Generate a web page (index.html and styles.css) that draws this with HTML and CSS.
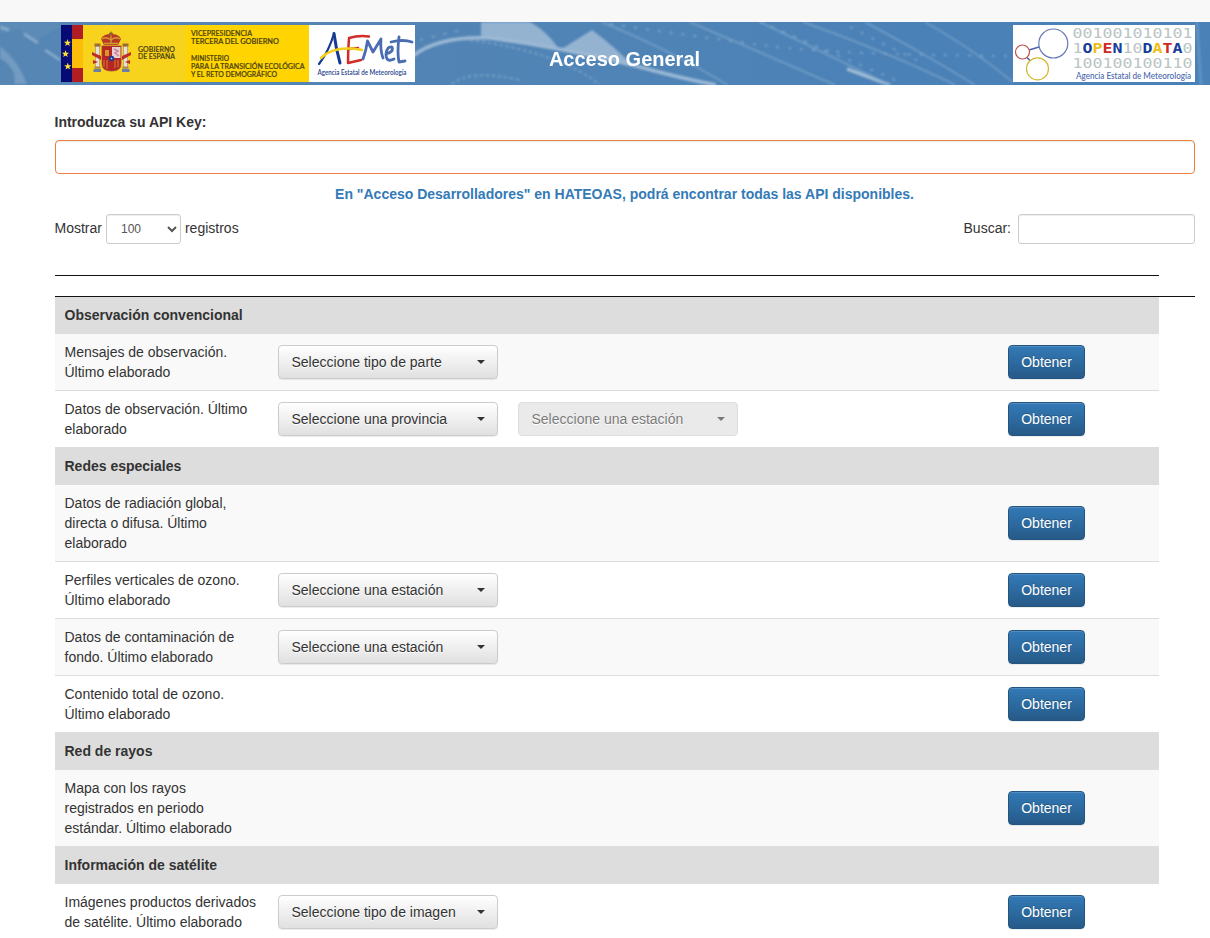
FILE: index.html
```html
<!DOCTYPE html>
<html lang="es">
<head>
<meta charset="utf-8">
<title>AEMET OpenData - Acceso General</title>
<link rel="stylesheet" href="styles.css">
</head>
<body>
<div class="topbar"></div>
<header class="banner">
  <svg class="banner-bg" viewBox="0 0 1210 63" preserveAspectRatio="none" aria-hidden="true">
    <defs><linearGradient id="sky" x2="1"><stop offset="0" stop-color="#5686b4"/><stop offset=".5" stop-color="#5084b6"/><stop offset=".75" stop-color="#4a81b7"/><stop offset="1" stop-color="#4a82b8"/></linearGradient>
    <filter id="soft"><feGaussianBlur stdDeviation=".8"/></filter></defs>
    <rect width="1210" height="63" fill="url(#sky)"/>
    <g filter="url(#soft)">
      <path d="M0 0H60V5L35 20L20 7L0 12Z" fill="#6895bd" opacity=".35"/>
      <path d="M0 24Q18 38 27 62H14Q18 48 0 36Z" fill="#8fb1cf" opacity=".5"/>
      <path d="M0 5L9 8M24 12L38 21M45 28L60 38" stroke="#a4c0d8" stroke-width="2.500" opacity=".7" fill="none"/>
      <path d="M481 0H530C543 7 552 17 560 28L592 8Q615 25 632 43Q580 31 548 26Q510 17 481 15Z" fill="#94b3d1"/>
      <path d="M413 34Q438 14 490 16Q560 25 636 44Q680 56 716 63" fill="none" stroke="#9dbad5" stroke-width="3.500"/>
      <path d="M847 47L890 63" stroke="#a6c1da" stroke-width="3"/>
      <path d="M602 0Q670 28 728 63M690 0L835 63M760 0L890 63M803 0Q900 35 955 63M865 0Q930 35 975 63M925 0Q970 25 1013 60M1197 0L1201 63" fill="none" stroke="#7ba4ca" stroke-width="2" opacity=".7"/>
      <path d="M470 18Q560 30 600 63M452 62Q470 47 520 58" fill="none" stroke="#9ab9d5" stroke-width="1.800" stroke-dasharray="3 3" opacity=".6"/>
      <path d="M610 2Q700 15 770 24T1013 34M760 0L900 60M420 18L460 8M850 5L920 40" fill="none" stroke="#94b7d7" stroke-width="1.800" stroke-dasharray="3 9" opacity=".65"/>
    </g>
  </svg>
  <svg class="logo-gob" width="354" height="57" viewBox="0 0 354 57" role="img" aria-label="Gobierno de España y AEMET">
    <rect width="354" height="57" fill="#fff"/>
    <rect width="11" height="57" fill="#050a75"/>
    <rect x="11" width="11" height="57" fill="#b01e24"/>
    <rect x="11" y="14" width="11" height="29" fill="#fcbd08"/>
    <rect x="22" width="103" height="57" fill="#f8d31d"/>
    <rect x="125" width="123" height="57" fill="#ffd400"/>
    <g fill="#ffe234">
      <path id="star" d="M6.500 14L7.400 16.700L10.100 16.700L8 18.400L8.800 21.100L6.500 19.500L4.200 21.100L5 18.400L2.900 16.700L5.600 16.700Z"/>
      <use href="#star" x="-2" y="11"/><use href="#star" x=".3" y="23.500"/>
    </g>
    <g>
      <path d="M40 14Q42 9 50 9Q58 9 60 14L57 20H43Z" fill="#b83a25"/>
      <path d="M41 14Q45 11 50 15Q55 11 59 14M50 8V19M43 18.500H57" fill="none" stroke="#d19a30" stroke-width="1.400"/>
      <path d="M48 8.300H52M50 6.500V11" stroke="#79542d" stroke-width="1"/>
      <path d="M41 21H60V39Q60 46 50.500 46Q41 46 41 39Z" fill="#b82424" stroke="#994533" stroke-width=".8"/>
      <path d="M51 22H59.500V33H51Z" fill="#e6cfd2"/><path d="M53 24L57 26L54 28L58 31" stroke="#ce7f98" stroke-width="1.500" fill="none"/>
      <path d="M44 25H48V31H44Z" fill="#d8952a"/>
      <path d="M43 35V42M46 35V44M54 35V43M57 35V42" stroke="#d18a2a" fill="none"/>
      <circle cx="50.500" cy="33.500" r="2.800" fill="#203b91"/><circle cx="50.500" cy="33.500" r=".8" fill="#ddd"/>
      <path d="M34.500 21H38.500V43H34.500ZM62.500 21H66.500V43H62.500Z" fill="#e4e0da" stroke="#a48a66" stroke-width=".6"/>
      <path d="M33.500 20H39.500M61.500 20H67.500" stroke="#9c6a35" stroke-width="3"/>
      <path d="M31 27L40 31L40 35L31 30ZM70 27L61 31L61 35L70 30ZM32 35L37 37L32 39ZM69 35L64 37L69 39Z" fill="#bd2d29"/>
      <path d="M32.500 45.500H40M61 45.500H68.500" stroke="#6a7ea6" stroke-width="3"/>
      <path d="M33.500 42.500H39.500M61.500 42.500H67.500" stroke="#a8844c" stroke-width="2"/>
    </g>
    <g class="gov-text">
      <text x="77" y="26.600" textLength="37" lengthAdjust="spacingAndGlyphs">GOBIERNO</text>
      <text x="77" y="34.100" textLength="37" lengthAdjust="spacingAndGlyphs">DE ESPAÑA</text>
      <text x="130" y="10.800" textLength="61" lengthAdjust="spacingAndGlyphs">VICEPRESIDENCIA</text>
      <text x="130" y="19" textLength="88" lengthAdjust="spacingAndGlyphs">TERCERA DEL GOBIERNO</text>
      <text x="130" y="35.600" textLength="38" lengthAdjust="spacingAndGlyphs">MINISTERIO</text>
      <text x="130" y="43.900" textLength="113.500" lengthAdjust="spacingAndGlyphs">PARA LA TRANSICIÓN ECOLÓGICA</text>
      <text x="130" y="52.200" textLength="86" lengthAdjust="spacingAndGlyphs">Y EL RETO DEMOGRÁFICO</text>
    </g>
    <g fill="none" stroke-linecap="round" stroke-linejoin="round">
      <path d="M258 39Q268 26 273 8.500" stroke="#163a91" stroke-width="2.200"/>
      <path d="M273 8.500Q275 24 279 38" stroke="#163a91" stroke-width="3"/>
      <path d="M308 11.500Q298 10 288 13Q287 25 287 38L300 35M288 24L297 23" stroke="#d12c27" stroke-width="2.500"/>
      <path d="M260 33Q273 20 301 25" stroke="#f5cf18" stroke-width="2.500"/>
      <path d="M302 34Q305 26 306.500 16L312 27L320 14Q319 25 322 33M325 29Q333 27 331 22Q326 21 325 29Q325 38 333 34" stroke="#4a6db2" stroke-width="2.800"/>
      <path d="M338 12Q336 28 338 37L344 36M330 17Q342 14 351 17" stroke="#4a6db2" stroke-width="2.800"/>
    </g>
    <text class="agency-small" x="256.500" y="49.500" textLength="89" lengthAdjust="spacingAndGlyphs">Agencia Estatal de Meteorología</text>
  </svg>
  <h1 class="banner-title">Acceso General</h1>
  <svg class="logo-open" width="182" height="57" viewBox="0 0 182 57" role="img" aria-label="AEMET OpenData">
    <rect width="182" height="57" fill="#fff"/>
    <g fill="none" stroke-width="1.200">
      <path d="M16 25L26 22M14 32.500L17.500 36" stroke="#4b62ae" stroke-width="1.600"/>
      <circle cx="40.300" cy="18.500" r="14.500" stroke="#6578b8"/>
      <circle cx="9.500" cy="27" r="7" stroke="#b9504a"/>
      <circle cx="24.500" cy="43.800" r="11" stroke="#d4b92f"/>
    </g>
    <g class="digits">
      <text x="59.500" y="13" textLength="120" lengthAdjust="spacingAndGlyphs">001001010101</text>
      <text x="59.500" y="28" textLength="120" lengthAdjust="spacingAndGlyphs">1<tspan class="b blue">O</tspan><tspan class="b gold">P</tspan><tspan class="b red">E</tspan><tspan class="b blue">N</tspan>10<tspan class="b blue">D</tspan><tspan class="b gold">A</tspan><tspan class="b red">T</tspan><tspan class="b blue">A</tspan>0</text>
      <text x="59.500" y="43" textLength="120" lengthAdjust="spacingAndGlyphs">100100100110</text>
    </g>
    <text class="agency" x="63" y="54" textLength="115" lengthAdjust="spacingAndGlyphs">Agencia Estatal de Meteorología</text>
  </svg>
</header>
<main class="content">
  <label class="key-label" for="apikey">Introduzca su API Key:</label>
  <input class="field key-input" id="apikey" type="text">
  <p class="notice">En "Acceso Desarrolladores" en HATEOAS, podrá encontrar todas las API disponibles.</p>
  <div class="controls">
    <label class="control"><span class="caption">Mostrar</span><select class="field small length"><option>100</option></select><span class="caption">registros</span></label>
    <label class="control search"><span class="caption">Buscar:</span><input class="field small search-input" type="search"></label>
  </div>
  <div class="table-head"></div>
  <div class="table-scroll">
    <section class="group">
      <h2 class="group-title">Observación convencional</h2>
      <div class="row shaded"><p class="name">Mensajes de observación. Último elaborado</p><div class="picks"><button class="btn pick">Seleccione tipo de parte<i class="caret"></i></button></div><button class="btn get">Obtener</button></div>
      <div class="row"><p class="name">Datos de observación. Último elaborado</p><div class="picks"><button class="btn pick">Seleccione una provincia<i class="caret"></i></button><button class="btn pick" disabled>Seleccione una estación<i class="caret"></i></button></div><button class="btn get">Obtener</button></div>
    </section>
    <section class="group">
      <h2 class="group-title">Redes especiales</h2>
      <div class="row shaded"><p class="name">Datos de radiación global, directa o difusa. Último elaborado</p><div class="picks"></div><button class="btn get">Obtener</button></div>
      <div class="row"><p class="name">Perfiles verticales de ozono. Último elaborado</p><div class="picks"><button class="btn pick">Seleccione una estación<i class="caret"></i></button></div><button class="btn get">Obtener</button></div>
      <div class="row shaded"><p class="name">Datos de contaminación de fondo. Último elaborado</p><div class="picks"><button class="btn pick">Seleccione una estación<i class="caret"></i></button></div><button class="btn get">Obtener</button></div>
      <div class="row"><p class="name">Contenido total de ozono. Último elaborado</p><div class="picks"></div><button class="btn get">Obtener</button></div>
    </section>
    <section class="group">
      <h2 class="group-title">Red de rayos</h2>
      <div class="row shaded"><p class="name">Mapa con los rayos registrados en periodo estándar. Último elaborado</p><div class="picks"></div><button class="btn get">Obtener</button></div>
    </section>
    <section class="group">
      <h2 class="group-title">Información de satélite</h2>
      <div class="row"><p class="name">Imágenes productos derivados de satélite. Último elaborado</p><div class="picks"><button class="btn pick">Seleccione tipo de imagen<i class="caret"></i></button></div><button class="btn get">Obtener</button></div>
    </section>
  </div>
</main>
</body>
</html>
```
FILE: styles.css
```css
* { box-sizing: border-box; }
html { overflow: hidden; }
body {
  margin: 0;
  height: 938px;
  overflow: hidden;
  background: #fff;
  color: #333;
  font: 14px/20px "Liberation Sans", Arial, sans-serif;
}
.topbar { height: 22px; background: #f8f8f8; }
.banner {
  position: relative;
  height: 63px;
  padding: 3px 15px 3px 61px;
  display: grid;
  grid-template-columns: 354px 1fr 182px;
}
.banner > * { position: relative; display: block; overflow: visible; }
.banner > .banner-bg { position: absolute; inset: 0; width: 100%; height: 100%; overflow: hidden; }
.banner-title {
  margin: 0;
  padding: 23px 0 0;
  text-align: center;
  text-indent: -179px;
  font-size: 20px;
  line-height: 22px;
  color: #fff;
}
.gov-text { font: 600 6.8px Lato, sans-serif; fill: #4d4310; stroke: #4d4310; stroke-width: .15px; }
.agency-small { font: 600 6.8px Lato, sans-serif; fill: #27458f; }
.agency { font: 500 8.5px Lato, sans-serif; fill: #4766ad; }
.digits { font: 14px "DejaVu Sans Mono", monospace; fill: #b9c4c4; }
.b { font-weight: bold; }
.blue { fill: #153e99; }
.gold { fill: #eebe16; }
.red { fill: #cc2b22; }

.content { padding: 27px 15.500px 0 54.500px; }
.key-label { display: block; font-weight: bold; }
.field {
  border: 1px solid #ccc;
  border-radius: 4px;
  background-color: #fff;
  box-shadow: inset 0 1px 1px rgba(0, 0, 0, .075);
  color: #555;
  font-family: inherit;
  outline: 0;
}
.key-input { display: block; width: 100%; height: 34px; margin-top: 8px; border-color: #ea7f40; }
.notice { margin: 10px 0; text-align: center; font-weight: bold; color: #337ab7; }
.controls { display: flex; justify-content: space-between; height: 30px; }
.control { display: flex; align-items: center; gap: 4px; height: 30px; white-space: nowrap; }
.caption { padding-bottom: 2px; }
.small { height: 30px; font-size: 12px; border-radius: 3px; }
.length { width: 75px; padding: 5px 10px; line-height: 18px; }
.search { gap: 6.500px; }
.search-input { width: 177px; }
.table-head { width: 1104px; height: 32px; border-bottom: 1px solid #111; margin-bottom: 20px; }
.table-scroll { border-top: 1px solid #111; }
.group { width: 1104px; }
.group-title {
  margin: 0;
  padding: 9px 10px;
  font-size: 14px;
  line-height: 20px;
  background: #ddd;
}
.group:first-child .group-title { padding-top: 8px; }
.row {
  display: grid;
  grid-template-columns: 193.500px 710px 77px;
  column-gap: 20px;
  align-items: center;
  padding: 8px 10px;
  border-top: 1px solid #ddd;
}
.group-title + .row { border-top: 0; }
.row.shaded { background: #f9f9f9; }
.name { margin: 0; }
.picks { display: flex; gap: 20px; }
.btn {
  height: 34px;
  padding: 6px 12px;
  border: 1px solid #ccc;
  border-radius: 4px;
  font: inherit;
}
.pick {
  display: flex;
  align-items: center;
  justify-content: space-between;
  width: 220px;
  padding-left: 12.500px;
  color: #333;
  background: linear-gradient(#fff, #e0e0e0);
  text-shadow: 0 1px 0 #fff;
  box-shadow: inset 0 1px 0 rgba(255, 255, 255, .15), 0 1px 1px rgba(0, 0, 0, .075);
}
.pick:disabled { background: #e0e0e0; opacity: .65; box-shadow: none; }
.caret { border: 4px solid transparent; border-top-color: currentColor; border-bottom: 0; }
.get {
  color: #fff;
  background: linear-gradient(#337ab7, #265a88);
  border-color: #245580;
  text-shadow: 0 -1px 0 rgba(0, 0, 0, .2);
  box-shadow: inset 0 1px 0 rgba(255, 255, 255, .15), 0 1px 1px rgba(0, 0, 0, .075);
}
```
